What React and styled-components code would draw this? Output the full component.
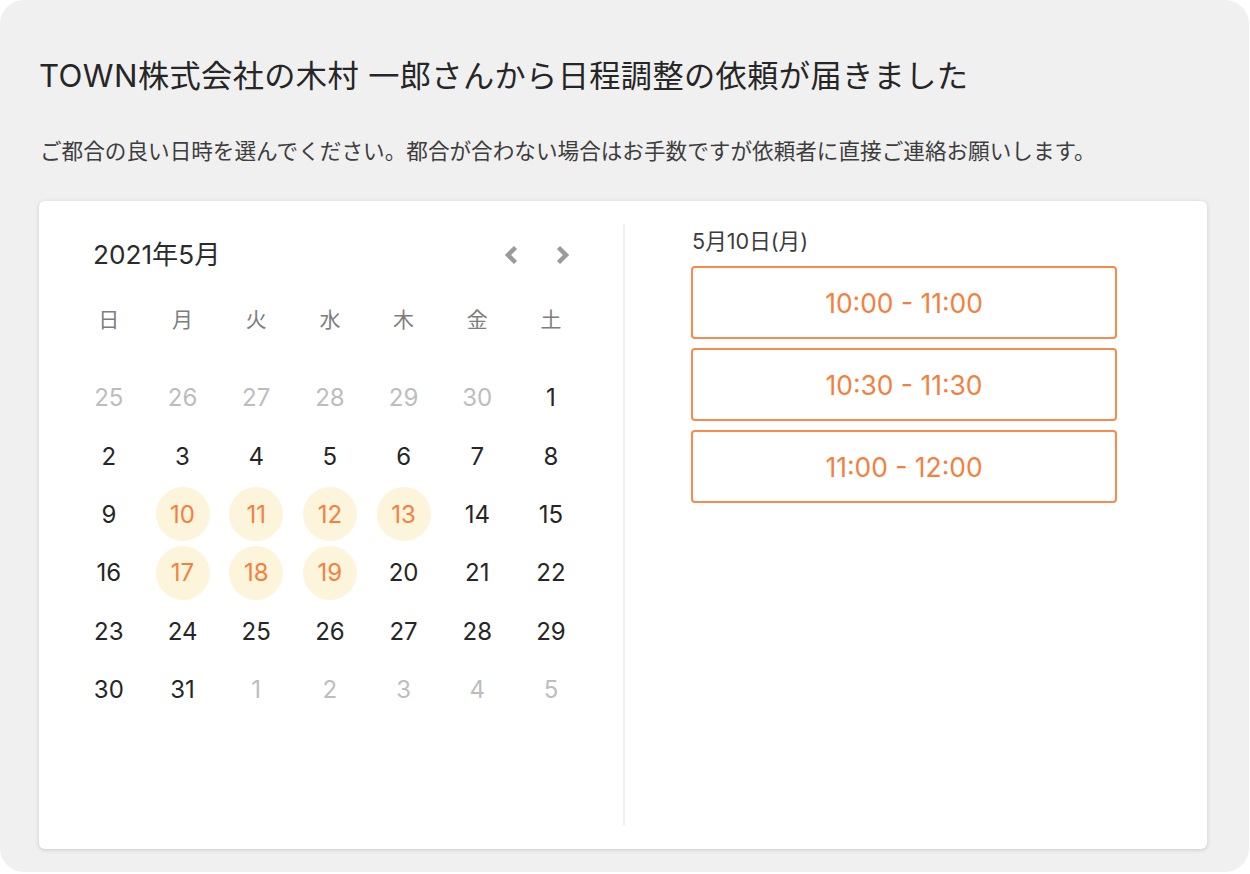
import React from "react";
import styled, { createGlobalStyle } from "styled-components";

const FONT = `Inter, "Noto Sans CJK JP", sans-serif`;

const Global = createGlobalStyle`
  html, body { margin: 0; background: #fff; }
  body { font-family: ${FONT}; }
  * { box-sizing: border-box; }
`;

const Frame = styled.div`
  width: 1249px;
  height: 872px;
  background: #f0f0f0;
  border-radius: 24px;
  padding: 55px 42px 23px 39px;
  display: flex;
  flex-direction: column;
`;
const Title = styled.h1`
  margin: 0;
  font-size: 31.2px;
  letter-spacing: 0.4px;
  line-height: 42px;
  font-weight: 400;
  color: #262626;
  white-space: nowrap;
`;
const Lead = styled.p`
  margin: 40px 0 0 1px;
  font-size: 21.62px;
  line-height: 28px;
  color: #3d3d3d;
  white-space: nowrap;
`;
const Card = styled.section`
  margin-top: 36px;
  flex: 1;
  background: #fff;
  border-radius: 6px;
  box-shadow: 0 1px 4px rgba(0, 0, 0, 0.16);
  padding: 23px 0 24px;
  display: flex;
`;
const CalendarPane = styled.div`
  width: 586px;
  border-right: 2px solid #efefef;
  padding: 9px 34px 0 33px;
`;
const CalendarHead = styled.div`
  display: flex;
  align-items: center;
  justify-content: space-between;
  height: 40px;
  padding: 0 14px 0 21px;
`;
const Month = styled.div`
  font-size: 26.2px;
  padding-bottom: 1px;
  color: #2b2b2b;
`;
const Arrows = styled.div`
  display: flex;
  gap: 28px;
  padding-top: 4px;
`;
const ArrowIcon = styled.svg`
  display: block;
  width: 24px;
  height: 24px;
`;
const Weekdays = styled.div`
  display: grid;
  grid-template-columns: repeat(7, 73.7px);
  margin-top: 27px;
`;
const Weekday = styled.div`
  height: 36px;
  display: flex;
  align-items: center;
  justify-content: center;
  font-size: 21px;
  color: #7d7d7d;
`;
const Days = styled.div`
  display: grid;
  grid-template-columns: repeat(7, 73.7px);
  grid-auto-rows: 58.4px;
  margin-top: 32.5px;
`;
const DayCell = styled.div`
  display: flex;
  align-items: center;
  justify-content: center;
`;
const Day = styled.div`
  width: 54px;
  height: 54px;
  border-radius: 50%;
  display: flex;
  align-items: center;
  justify-content: center;
  font-size: 24px;
  background: ${(p) => (p.$tone === "open" ? "#fdf4dc" : "transparent")};
  color: ${(p) =>
    p.$tone === "open" ? "#f5803e" : p.$tone === "muted" ? "#bdbdbd" : "#262626"};
`;
const SlotPane = styled.div`
  flex: 1;
  padding: 5px 0 0 66px;
`;
const SlotDate = styled.div`
  font-size: 21.6px;
  line-height: 25px;
  color: #3d3d3d;
  margin-left: 1px;
`;
const Slots = styled.div`
  margin-top: 12px;
  width: 426px;
  display: flex;
  flex-direction: column;
  gap: 9px;
`;
const Slot = styled.button`
  height: 73px;
  padding: 0;
  background: #fff;
  border: 2px solid #f68b4c;
  border-radius: 4px;
  color: #f5803e;
  font-family: ${FONT};
  font-size: 26.4px;
`;

const Arrow = ({ dir }) => (
  <ArrowIcon viewBox="0 0 24 24" aria-hidden="true">
    <path
      d={dir === "left" ? "M16.5 4.5 9 12l7.5 7.5" : "M7.5 4.5 15 12l-7.5 7.5"}
      fill="none"
      stroke="#9b9b9b"
      strokeWidth="4.5"
    />
  </ArrowIcon>
);

const week = ["日", "月", "火", "水", "木", "金", "土"];
const open = new Set([10, 11, 12, 13, 17, 18, 19]);
const days = [
  ...[25, 26, 27, 28, 29, 30].map((n) => ({ n, tone: "muted" })),
  ...Array.from({ length: 31 }, (_, i) => ({
    n: i + 1,
    tone: open.has(i + 1) ? "open" : "plain",
  })),
  ...[1, 2, 3, 4, 5].map((n) => ({ n, tone: "muted" })),
];
const slots = ["10:00 - 11:00", "10:30 - 11:30", "11:00 - 12:00"];

export default function App() {
  return (
    <>
      <Global />
      <Frame>
        <Title>TOWN株式会社の木村 一郎さんから日程調整の依頼が届きました</Title>
        <Lead>ご都合の良い日時を選んでください。都合が合わない場合はお手数ですが依頼者に直接ご連絡お願いします。</Lead>
        <Card>
          <CalendarPane>
            <CalendarHead>
              <Month>2021年5月</Month>
              <Arrows>
                <Arrow dir="left" />
                <Arrow dir="right" />
              </Arrows>
            </CalendarHead>
            <Weekdays>
              {week.map((w) => (
                <Weekday key={w}>{w}</Weekday>
              ))}
            </Weekdays>
            <Days>
              {days.map((d, i) => (
                <DayCell key={i}>
                  <Day $tone={d.tone}>{d.n}</Day>
                </DayCell>
              ))}
            </Days>
          </CalendarPane>
          <SlotPane>
            <SlotDate>5月10日(月)</SlotDate>
            <Slots>
              {slots.map((s) => (
                <Slot key={s}>{s}</Slot>
              ))}
            </Slots>
          </SlotPane>
        </Card>
      </Frame>
    </>
  );
}
